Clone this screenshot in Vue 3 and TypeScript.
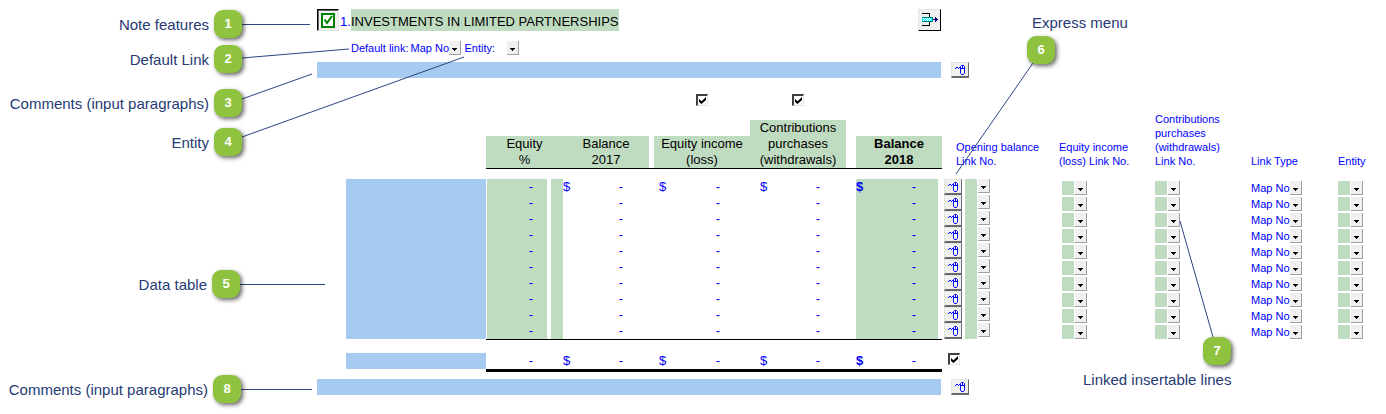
<script setup lang="ts">
import { ref } from 'vue'

interface Callout {
  id: number
  text: string
}

interface Line {
  description: string
  mapType: string
}

const callouts: Callout[] = [
  { id: 1, text: 'Note features' },
  { id: 2, text: 'Default Link' },
  { id: 3, text: 'Comments (input paragraphs)' },
  { id: 4, text: 'Entity' },
  { id: 5, text: 'Data table' },
  { id: 6, text: 'Express menu' },
  { id: 7, text: 'Linked insertable lines' },
  { id: 8, text: 'Comments (input paragraphs)' },
]

const lines = ref<Line[]>(
  Array.from({ length: 10 }, () => ({ description: '', mapType: 'Map No' })),
)
const upperComment = ref('')
const lowerComment = ref('')
const totalDescription = ref('')
const defaultLink = ref('Map No')
const showIncome = ref(true)
const showContributions = ref(true)
const showTotal = ref(true)
</script>

<template>
  <main class="page">
    <svg width="0" height="0" class="defs" aria-hidden="true">
      <symbol id="mouse" viewBox="0 0 12 11">
        <path d="M0 4H1V3H3V4H4V3H5V4H4V5H3V4H1V5H0Z" fill="#00f" />
        <path d="M5.500 2.500L6.500 1.500H8.500L9.500 2.500V9L8.500 10.500H6.500L5.500 9Z" fill="#fff" stroke="#00f" />
        <path d="M7 2H8V5H7Z M5 4H7V5H5Z M8 4H10V5H8Z" fill="#00f" />
      </symbol>
      <symbol id="drop" viewBox="0 0 12 14">
        <path d="M0 0H12V14H0Z" fill="#f0f0f0" />
        <path d="M11 0H12V14H0V13H11Z" fill="#a0a0a0" />
        <path d="M3 7H8V8H7V9H6V10H5V9H4V8H3Z" fill="#000" />
      </symbol>
    </svg>

    <section class="sheet">
      <header class="title-row">
        <button type="button" class="note-button" aria-label="Note features">
          <svg width="18" height="18" viewBox="0 0 18 18" aria-hidden="true">
            <rect x="3" y="3" width="12" height="13" fill="#fff" stroke="#008000" stroke-width="2" />
            <path d="M5.500 8.500L8 12L13 5" fill="none" stroke="#008000" stroke-width="2" />
          </svg>
        </button>
        <span class="number">1.</span>
        <h1>INVESTMENTS IN LIMITED PARTNERSHIPS</h1>
        <button type="button" class="insert-button" aria-label="Insert row">
          <svg width="17" height="15" viewBox="0 0 17 15" shape-rendering="crispEdges" aria-hidden="true">
            <path d="M0 0H8V4H7V1H0Z M0 12H7V9H8V13H0Z" fill="#000" />
            <path d="M0 4H11V9H0Z" fill="#008080" />
            <path d="M0 5H10V8H0Z" fill="#0ff" />
            <path d="M1 5h1v1h-1z M3 5h1v1h-1z M5 5h1v1h-1z M7 5h1v1h-1z M2 6h1v1h-1z M4 6h1v1h-1z M6 6h1v1h-1z M8 6h1v1h-1z M1 7h1v1h-1z M3 7h1v1h-1z M5 7h1v1h-1z M7 7h1v1h-1z" fill="#fff" />
            <path d="M11 6H13V4H14V5H15V6H16V7H15V8H14V9H13V7H11Z" fill="#000080" />
          </svg>
        </button>
      </header>

      <div class="link-row">
        <label for="default-link">Default link:</label>
        <span class="picker text-picker">
          <select id="default-link" v-model="defaultLink"><option>Map No</option></select>
          <svg width="12" height="14" aria-hidden="true"><use href="#drop" /></svg>
        </span>
        <label for="default-entity" class="entity-label">Entity:</label>
        <span class="picker blank-picker">
          <select id="default-entity"><option></option></select>
          <svg width="12" height="14" aria-hidden="true"><use href="#drop" /></svg>
        </span>
      </div>

      <div class="comment-row">
        <input v-model="upperComment" type="text" class="comment" aria-label="Comments above the table">
        <button type="button" class="express" aria-label="Express menu">
          <svg width="12" height="11" aria-hidden="true"><use href="#mouse" /></svg>
        </button>
      </div>

      <table>
        <colgroup>
          <col class="w-desc"><col class="w-equity"><col class="w-gap"><col class="w-flag">
          <col class="w-balance"><col class="w-split"><col class="w-wide"><col class="w-wide">
          <col class="w-space"><col class="w-balance"><col class="w-express"><col class="w-opening">
          <col class="w-wide"><col class="w-wide"><col class="w-type"><col>
        </colgroup>
        <thead>
          <tr class="toggles">
            <td colspan="6"></td>
            <td><input v-model="showIncome" type="checkbox" aria-label="Show equity income (loss)"></td>
            <td><input v-model="showContributions" type="checkbox" aria-label="Show contributions"></td>
            <td colspan="8"></td>
          </tr>
          <tr class="heads">
            <td></td>
            <th colspan="3"><div>Equity<br>%</div></th>
            <th><div>Balance<br>2017</div></th>
            <td></td>
            <th><div>Equity income<br>(loss)</div></th>
            <th><div>Contributions<br>purchases<br>(withdrawals)</div></th>
            <td></td>
            <th class="strong"><div>Balance<br>2018</div></th>
            <th colspan="2" class="link-head opening-head">Opening balance<br>Link No.</th>
            <th class="link-head">Equity income<br>(loss) Link No.</th>
            <th class="link-head">Contributions<br>purchases<br>(withdrawals)<br>Link No.</th>
            <th class="link-head">Link Type</th>
            <th class="link-head">Entity</th>
          </tr>
        </thead>
        <tbody>
          <tr class="rule rule-head"><td></td><td colspan="9" class="ruled"></td><td colspan="6"></td></tr>
          <tr v-for="(line, i) in lines" :key="i" class="line">
            <td><input v-model="line.description" type="text" class="description" :aria-label="`Description ${i + 1}`"></td>
            <td class="equity green">-</td>
            <td></td>
            <td class="green"></td>
            <td><div class="money balance"><span>{{ i === 0 ? '$' : '' }}</span><span>-</span></div></td>
            <td></td>
            <td><div class="money income"><span>{{ i === 0 ? '$' : '' }}</span><span>-</span></div></td>
            <td><div class="money contribution"><span>{{ i === 0 ? '$' : '' }}</span><span>-</span></div></td>
            <td></td>
            <td><div class="money closing green"><b>{{ i === 0 ? '$' : '' }}</b><span>-</span></div></td>
            <td class="express-cell">
              <button type="button" class="express" :aria-label="`Express menu, line ${i + 1}`">
                <svg width="12" height="11" aria-hidden="true"><use href="#mouse" /></svg>
              </button>
            </td>
            <td>
              <span class="picker value-picker tall">
                <select :aria-label="`Opening balance link, line ${i + 1}`"><option></option></select>
                <svg width="12" height="14" aria-hidden="true"><use href="#drop" /></svg>
              </span>
            </td>
            <td class="low indent">
              <span class="picker value-picker">
                <select :aria-label="`Equity income link, line ${i + 1}`"><option></option></select>
                <svg width="12" height="14" aria-hidden="true"><use href="#drop" /></svg>
              </span>
            </td>
            <td class="low">
              <span class="picker value-picker">
                <select :aria-label="`Contributions link, line ${i + 1}`"><option></option></select>
                <svg width="12" height="14" aria-hidden="true"><use href="#drop" /></svg>
              </span>
            </td>
            <td class="low">
              <span class="picker text-picker">
                <select v-model="line.mapType" :aria-label="`Link type, line ${i + 1}`"><option>Map No</option></select>
                <svg width="12" height="14" aria-hidden="true"><use href="#drop" /></svg>
              </span>
            </td>
            <td class="low">
              <span class="picker value-picker">
                <select :aria-label="`Entity, line ${i + 1}`"><option></option></select>
                <svg width="12" height="14" aria-hidden="true"><use href="#drop" /></svg>
              </span>
            </td>
          </tr>
          <tr class="rule rule-total"><td></td><td colspan="9" class="ruled"></td><td colspan="6"></td></tr>
        </tbody>
        <tfoot>
          <tr class="line">
            <td><input v-model="totalDescription" type="text" class="description" aria-label="Total description"></td>
            <td class="equity">-</td>
            <td colspan="2"></td>
            <td><div class="money balance"><span>$</span><span>-</span></div></td>
            <td></td>
            <td><div class="money income"><span>$</span><span>-</span></div></td>
            <td><div class="money contribution"><span>$</span><span>-</span></div></td>
            <td></td>
            <td><div class="money closing"><b>$</b><span>-</span></div></td>
            <td class="total-check"><input v-model="showTotal" type="checkbox" aria-label="Show total"></td>
            <td colspan="5"></td>
          </tr>
          <tr class="rule rule-end"><td></td><td colspan="9" class="ruled"></td><td colspan="6"></td></tr>
        </tfoot>
      </table>

      <div class="comment-row">
        <input v-model="lowerComment" type="text" class="comment" aria-label="Comments below the table">
        <button type="button" class="express" aria-label="Express menu">
          <svg width="12" height="11" aria-hidden="true"><use href="#mouse" /></svg>
        </button>
      </div>
    </section>

    <svg class="leaders" width="1386" height="414" viewBox="0 0 1386 414" aria-hidden="true">
      <path d="M242 24.500H310M242 58L349 49M242 99L312 74M242 137L464 57M240 284.500H325M241 389.500H312M1033 63L956 174M1213 337L1180 221" />
    </svg>
    <div v-for="c in callouts" :key="c.id" class="callout" :class="`callout-${c.id}`">
      <span class="caption">{{ c.text }}</span>
      <span class="badge">{{ c.id }}</span>
    </div>
  </main>
</template>

<style>
body {
  margin: 0;
  background: #fff;
}
</style>

<style scoped>
.page,
.page * {
  box-sizing: border-box;
}
.page {
  position: relative;
  overflow: hidden;
  padding: 9px 0 19px;
  font: 13px/16px "Liberation Sans", Arial, sans-serif;
  color: #000;
}
.defs {
  position: absolute;
}
svg {
  display: block;
}
button,
input,
select {
  margin: 0;
  padding: 0;
  border: 0;
  border-radius: 0;
  font: inherit;
}
.sheet {
  padding-left: 317px;
}
.title-row {
  display: flex;
  align-items: center;
  max-width: 624px;
  height: 22px;
}
.note-button {
  width: 22px;
  height: 22px;
  padding: 1px;
  border: 1px solid #e3e3e3;
  border-top-color: #000;
  border-left-color: #000;
  box-shadow: inset 1px 1px #696969;
  background: #f0f0f0;
}
.number {
  width: 12px;
  padding-left: 1px;
  line-height: 26px;
  color: #00f;
  white-space: nowrap;
}
h1 {
  height: 22px;
  margin: 0;
  overflow: hidden;
  background: #c0dcc0;
  font-size: 13px;
  font-weight: 400;
  line-height: 26px;
}
.number {
  height: 22px;
}
.insert-button {
  width: 23px;
  height: 22px;
  margin-left: auto;
  padding: 3px 3px 2px;
  border: 1px solid #000;
  border-top-color: #e3e3e3;
  border-left-color: #e3e3e3;
  background: #f0f0f0;
}
.link-row {
  display: flex;
  align-items: center;
  height: 14px;
  margin: 10px 0 7px;
  padding-left: 34px;
  font-size: 11px;
  line-height: 14px;
  color: #00f;
}
.link-row .text-picker {
  margin-left: 2px;
}
.entity-label {
  margin-left: 3px;
}
.blank-picker {
  width: 24px;
}
.picker {
  display: grid;
  height: 14px;
}
.picker > * {
  grid-area: 1 / 1;
}
.picker svg {
  justify-self: end;
  pointer-events: none;
}
.picker select {
  appearance: none;
  width: 100%;
  height: 14px;
  background: transparent;
  color: #00f;
  font-size: 11px;
  line-height: 14px;
}
.text-picker {
  width: 51px;
}
.value-picker {
  width: 25px;
  background: linear-gradient(to right, #c0dcc0 12px, transparent 12px);
}
.value-picker.tall {
  height: 16px;
}
.comment-row {
  display: flex;
  gap: 10px;
}
.comment {
  flex: 0 1 624px;
  min-width: 0;
  height: 16px;
  background: #a6caf0;
}
.express {
  display: grid;
  width: 18px;
  height: 16px;
  padding: 1px 0 0 3px;
  place-content: start;
  border: 1px solid #e3e3e3;
  border-right: 1px solid #696969;
  border-bottom: 2px solid #696969;
  background: #f0f0f0;
}
table {
  width: calc(100% - 29px);
  margin-left: 29px;
  border-spacing: 0;
  table-layout: fixed;
}
.w-desc { width: 140px; }
.w-equity { width: 61px; }
.w-gap { width: 4px; }
.w-flag { width: 12px; }
.w-balance { width: 86px; }
.w-split { width: 5px; }
.w-wide { width: 96px; }
.w-space { width: 10px; }
.w-express { width: 23px; }
.w-opening { width: 94px; }
.w-type { width: 87px; }
td,
th {
  padding: 0;
}
.toggles td {
  height: 34px;
  padding-top: 16px;
  vertical-align: top;
}
input[type='checkbox'] {
  appearance: none;
  display: block;
  width: 12px;
  height: 12px;
  margin: 0 auto;
  border: 1px solid #e3e3e3;
  border-top: 2px solid #404040;
  border-left: 2px solid #404040;
  background: #fff;
}
input[type='checkbox']:checked::before {
  content: '';
  display: block;
  width: 7px;
  height: 7px;
  margin: 1px;
  background: #000;
  clip-path: polygon(0 28%, 36% 60%, 100% 0, 100% 43%, 36% 100%, 0 70%);
}
.heads td,
.heads th {
  vertical-align: bottom;
  font-weight: 400;
}
.heads th div {
  background: #c0dcc0;
}
.heads .strong {
  font-weight: 700;
}
.heads .link-head {
  font-size: 11px;
  line-height: 14px;
  text-align: left;
  color: #00f;
}
.heads .opening-head {
  padding-left: 14px;
}
.ruled {
  border-top: 1px solid #000;
}
.rule-head td {
  height: 11px;
}
.rule-total td {
  height: 14px;
}
.rule-end td {
  height: 10px;
}
.rule-end .ruled {
  border-top-width: 3px;
}
.line td {
  height: 16px;
  vertical-align: top;
}
.line .low {
  vertical-align: bottom;
}
.line .indent {
  padding-left: 3px;
}
.description {
  display: block;
  width: 100%;
  height: 16px;
  background: #a6caf0;
}
.green {
  background: #c0dcc0;
}
.equity {
  padding-right: 14px;
  border-left: 1px solid #fff;
  text-align: right;
  color: #00f;
}
.money {
  display: flex;
  justify-content: space-between;
  height: 16px;
  color: #00f;
}
.balance {
  padding-right: 26px;
}
.income {
  padding: 0 30px 0 5px;
}
.contribution {
  padding: 0 26px 0 10px;
}
.closing {
  margin-right: 4px;
  padding-right: 22px;
}
.express-cell {
  padding-left: 2px;
}
.total-check input[type='checkbox'] {
  margin: 0 0 0 6px;
}
.leaders {
  position: absolute;
  top: 0;
  left: 0;
  pointer-events: none;
}
.leaders path {
  fill: none;
  stroke: #2c4580;
  stroke-width: 1;
}
.callout {
  position: absolute;
  display: flex;
  align-items: center;
  justify-content: flex-end;
  gap: 5px;
  width: 242px;
  left: 0;
  white-space: nowrap;
}
.caption {
  padding-top: 2px;
  font-size: 15px;
  line-height: 18px;
  color: #263a74;
}
.badge {
  width: 28px;
  height: 28px;
  border-radius: 9px;
  background: #8fc33f;
  box-shadow: 2px 2px 4px rgba(0, 0, 0, 0.6);
  color: #fff;
  font-size: 13px;
  font-weight: 700;
  line-height: 28px;
  text-align: center;
}
.callout-1 { top: 10px; }
.callout-2 { top: 45px; }
.callout-3 { top: 89px; }
.callout-4 { top: 128px; }
.callout-5 { top: 270px; width: 240px; }
.callout-8 { top: 375px; width: 241px; }
.callout-6 {
  top: 12px;
  left: 1027px;
  flex-direction: column;
  align-items: flex-start;
  gap: 4px;
  width: auto;
}
.callout-6 .caption {
  padding-left: 5px;
}
.callout-7 {
  top: 337px;
  left: 1083px;
  flex-direction: column-reverse;
  align-items: flex-start;
  gap: 4px;
  width: auto;
}
.callout-7 .badge {
  margin-left: 120px;
}
</style>
